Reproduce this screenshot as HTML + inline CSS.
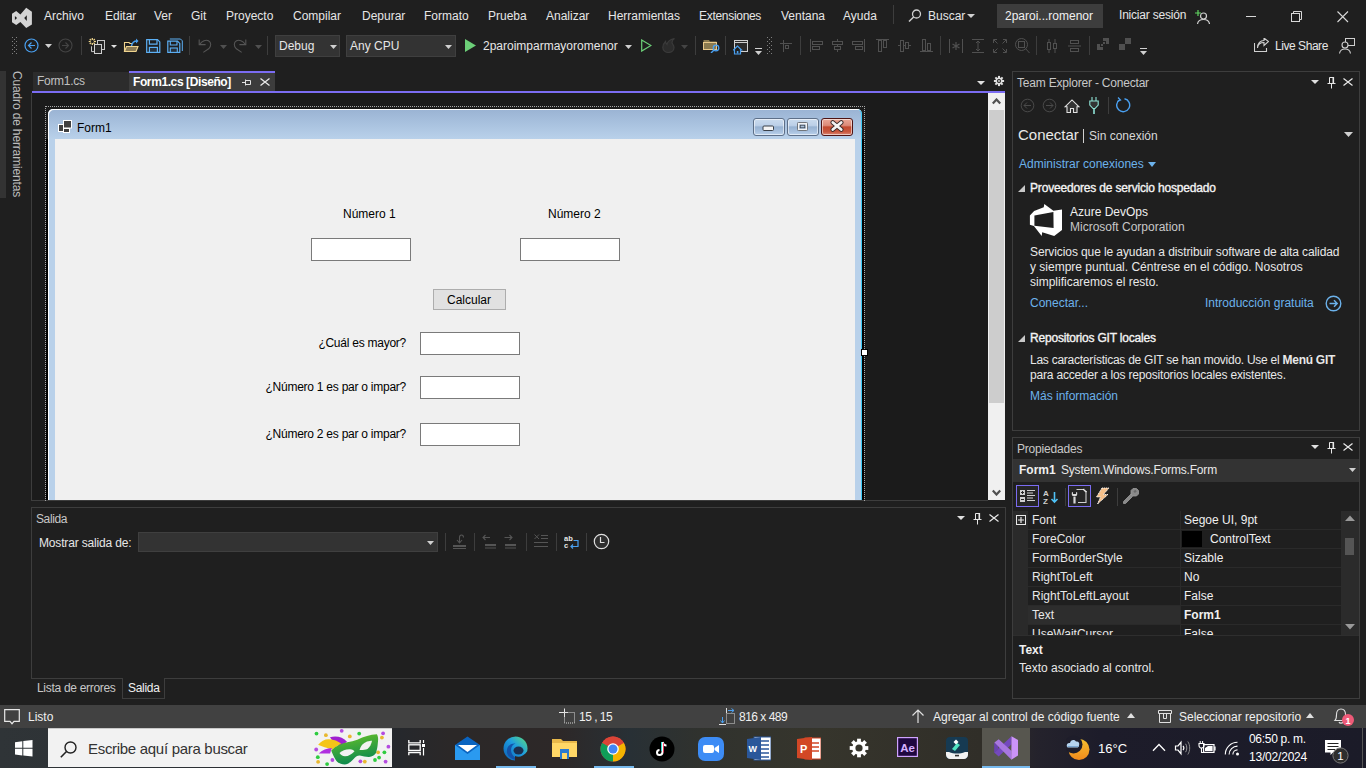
<!DOCTYPE html>
<html><head><meta charset="utf-8"><title>VS</title>
<style>
html,body{margin:0;padding:0;}
body{width:1366px;height:768px;overflow:hidden;background:#1f1f1f;position:relative;font-family:"Liberation Sans",sans-serif;}
body div,body span,body svg{position:absolute;}
span{white-space:pre;}
span b{position:static;}
</style></head><body>
<svg style="left:8px;top:4px;" width="30" height="28" viewBox="0 0 30 28"><path d="M4 9.8 L8.2 6.9 L12.4 10.6 L18.2 3.8 L23.9 7.7 V20.4 L18.2 24.1 L12.4 17.9 L8.2 21.1 L4 18.2 Z M6.9 12 L9.1 14 L6.9 16 Z M18.8 11.3 L16.2 14 L18.8 17 Z" fill="#d4d4d4" fill-rule="evenodd"/></svg>
<span style="left:44px;top:10.03px;font-size:12px;line-height:12px;color:#e6e6e6;font-weight:400;">Archivo</span>
<span style="left:105px;top:10.03px;font-size:12px;line-height:12px;color:#e6e6e6;font-weight:400;">Editar</span>
<span style="left:154px;top:10.03px;font-size:12px;line-height:12px;color:#e6e6e6;font-weight:400;">Ver</span>
<span style="left:191px;top:10.03px;font-size:12px;line-height:12px;color:#e6e6e6;font-weight:400;">Git</span>
<span style="left:226px;top:10.03px;font-size:12px;line-height:12px;color:#e6e6e6;font-weight:400;">Proyecto</span>
<span style="left:293px;top:10.03px;font-size:12px;line-height:12px;color:#e6e6e6;font-weight:400;">Compilar</span>
<span style="left:362px;top:10.03px;font-size:12px;line-height:12px;color:#e6e6e6;font-weight:400;">Depurar</span>
<span style="left:424px;top:10.03px;font-size:12px;line-height:12px;color:#e6e6e6;font-weight:400;">Formato</span>
<span style="left:488px;top:10.03px;font-size:12px;line-height:12px;color:#e6e6e6;font-weight:400;">Prueba</span>
<span style="left:546px;top:10.03px;font-size:12px;line-height:12px;color:#e6e6e6;font-weight:400;">Analizar</span>
<span style="left:608px;top:10.03px;font-size:12px;line-height:12px;color:#e6e6e6;font-weight:400;">Herramientas</span>
<span style="left:699px;top:10.03px;font-size:12px;line-height:12px;color:#e6e6e6;font-weight:400;letter-spacing:-0.3px">Extensiones</span>
<span style="left:781px;top:10.03px;font-size:12px;line-height:12px;color:#e6e6e6;font-weight:400;">Ventana</span>
<span style="left:843px;top:10.03px;font-size:12px;line-height:12px;color:#e6e6e6;font-weight:400;">Ayuda</span>
<div style="left:893px;top:5px;width:1px;height:19px;background:#3d3d3d;"></div>
<svg style="left:908px;top:9px;" width="14" height="13" viewBox="0 0 14 13"><circle cx="8.5" cy="5" r="4" fill="none" stroke="#d0d0d0" stroke-width="1.3"/><path d="M5.6 8 L1 12.5" stroke="#d0d0d0" stroke-width="1.5"/></svg>
<span style="left:928px;top:10.03px;font-size:12px;line-height:12px;color:#e6e6e6;font-weight:400;">Buscar</span>
<svg style="left:967px;top:14px;" width="8" height="5" viewBox="0 0 8 5"><path d="M0 0 H8 L4 4 Z" fill="#d0d0d0"/></svg>
<div style="left:997px;top:4px;width:106px;height:24px;background:#3d3d3d;"></div>
<span style="left:1005px;top:10.03px;font-size:12px;line-height:12px;color:#f0f0f0;font-weight:400;">2paroi...romenor</span>
<span style="left:1119px;top:9.03px;font-size:12px;line-height:12px;color:#e6e6e6;font-weight:400;letter-spacing:-0.2px">Iniciar sesión</span>
<svg style="left:1194px;top:9px;" width="16" height="15" viewBox="0 0 16 15"><path d="M1 4 H7 M4 1 V7" stroke="#5fd35f" stroke-width="1.2"/><circle cx="9.5" cy="7" r="3" fill="none" stroke="#d0d0d0" stroke-width="1.2"/><path d="M3.5 15 C4 11 7 10.5 9.5 10.5 C12 10.5 15 11 15.5 15" fill="none" stroke="#d0d0d0" stroke-width="1.2"/></svg>
<div style="left:1246px;top:16px;width:10px;height:1px;background:#d8d8d8;"></div>
<svg style="left:1291px;top:11px;" width="12" height="11" viewBox="0 0 12 11"><rect x="0.5" y="2.5" width="8" height="8" fill="none" stroke="#d8d8d8"/><path d="M2.5 2.5 V0.5 H10.5 V8.5 H8.5" fill="none" stroke="#d8d8d8"/></svg>
<svg style="left:1337px;top:11px;" width="12" height="12" viewBox="0 0 12 12"><path d="M0.5 0.5 L11 11 M11 0.5 L0.5 11" stroke="#d8d8d8" stroke-width="1.1"/></svg>
<svg style="left:12px;top:37px;" width="5" height="17" viewBox="0 0 5 17"><rect x="0" y="0" width="1" height="1" fill="#808080"/><rect x="4" y="0" width="1" height="1" fill="#808080"/><rect x="2" y="2" width="1" height="1" fill="#808080"/><rect x="0" y="4" width="1" height="1" fill="#808080"/><rect x="4" y="4" width="1" height="1" fill="#808080"/><rect x="2" y="6" width="1" height="1" fill="#808080"/><rect x="0" y="8" width="1" height="1" fill="#808080"/><rect x="4" y="8" width="1" height="1" fill="#808080"/><rect x="2" y="10" width="1" height="1" fill="#808080"/><rect x="0" y="12" width="1" height="1" fill="#808080"/><rect x="4" y="12" width="1" height="1" fill="#808080"/><rect x="2" y="14" width="1" height="1" fill="#808080"/><rect x="0" y="16" width="1" height="1" fill="#808080"/><rect x="4" y="16" width="1" height="1" fill="#808080"/></svg>
<svg style="left:24px;top:38px;" width="15" height="15" viewBox="0 0 15 15"><circle cx="7.5" cy="7.5" r="6.5" fill="none" stroke="#4aa0f0" stroke-width="1.2"/><path d="M11 7.5 H4.5 M7.5 4.5 L4.5 7.5 L7.5 10.5" fill="none" stroke="#4aa0f0" stroke-width="1.2"/></svg>
<svg style="left:45px;top:44px;" width="7" height="4" viewBox="0 0 7 4"><path d="M0 0 H7 L3.5 4 Z" fill="#d0d0d0"/></svg>
<svg style="left:58px;top:38px;" width="15" height="15" viewBox="0 0 15 15"><circle cx="7.5" cy="7.5" r="6.5" fill="none" stroke="#444" stroke-width="1.1"/><path d="M4 7.5 H10.5 M7.5 4.5 L10.5 7.5 L7.5 10.5" fill="none" stroke="#444" stroke-width="1.1"/></svg>
<div style="left:81px;top:36px;width:1px;height:19px;background:#3d3d3d;"></div>
<svg style="left:84px;top:34px;" width="60" height="22" viewBox="0 0 60 22"><g transform="translate(8.3 7.5)"><path d="M0 -1.6 V-3.6" stroke="#f3d98e" stroke-width="1.2" transform="rotate(0)"/><path d="M0 -1.6 V-3.6" stroke="#f3d98e" stroke-width="1.2" transform="rotate(45)"/><path d="M0 -1.6 V-3.6" stroke="#f3d98e" stroke-width="1.2" transform="rotate(90)"/><path d="M0 -1.6 V-3.6" stroke="#f3d98e" stroke-width="1.2" transform="rotate(135)"/><path d="M0 -1.6 V-3.6" stroke="#f3d98e" stroke-width="1.2" transform="rotate(180)"/><path d="M0 -1.6 V-3.6" stroke="#f3d98e" stroke-width="1.2" transform="rotate(225)"/><path d="M0 -1.6 V-3.6" stroke="#f3d98e" stroke-width="1.2" transform="rotate(270)"/><path d="M0 -1.6 V-3.6" stroke="#f3d98e" stroke-width="1.2" transform="rotate(315)"/></g><rect x="13.5" y="6.5" width="7" height="9" fill="#262626" stroke="#c8c8c8" stroke-width="1"/><path d="M7.5 12.3 V17.6 H10" fill="none" stroke="#c8c8c8" stroke-width="1"/><rect x="10.5" y="10.5" width="7" height="9" fill="#2a2a2a" stroke="#d0d0d0" stroke-width="1"/><path d="M27 11 H33 L30 14 Z" fill="#e0e0e0"/><path d="M40.5 17.5 V8.5 H45 L46 9.5 H48" fill="none" stroke="#f0d48e" stroke-width="1.1"/><path d="M40.5 17.5 L42.5 12.5 H54 L52 17.5 Z" fill="#8a7a55" stroke="#f0d48e" stroke-width="1.1"/><path d="M47.5 12 C48 9 50 7 53 7" fill="none" stroke="#4aa0f0" stroke-width="1.5"/><path d="M52 4.5 L54.5 7 L52 9.5 Z" fill="#4aa0f0"/></svg>
<svg style="left:145px;top:38px;" width="17" height="16" viewBox="0 0 17 16"><path d="M1.7 1.6 H12.5 L14.8 3.9 V14.4 H1.7 Z" fill="none" stroke="#5cb0f5" stroke-width="1.2"/><path d="M4.4 1.6 V6.1 H12 V1.6" fill="none" stroke="#5cb0f5" stroke-width="1.2"/><rect x="4.4" y="9.4" width="8" height="5" fill="#26313c" stroke="#5cb0f5" stroke-width="1.2"/></svg>
<svg style="left:166px;top:38px;" width="17" height="16" viewBox="0 0 17 16"><path d="M3.8 1 H14.5 L16.3 2.8 V13" fill="none" stroke="#5cb0f5" stroke-width="1"/><path d="M1.8 3.1 H11.5 L13.8 5.4 V14.4 H1.8 Z" fill="none" stroke="#5cb0f5" stroke-width="1.2"/><path d="M4.3 3.1 V7 H11 V3.1" fill="none" stroke="#5cb0f5" stroke-width="1.1"/><rect x="4.3" y="10" width="7" height="4.4" fill="#26313c" stroke="#5cb0f5" stroke-width="1.1"/></svg>
<div style="left:189px;top:36px;width:1px;height:19px;background:#3d3d3d;"></div>
<svg style="left:196px;top:37px;" width="18" height="18" viewBox="0 0 18 18"><path d="M3.2 2.5 V7.6 H9.6" fill="none" stroke="#555" stroke-width="1.1"/><path d="M3.8 7.2 C6 3.8 10 2.5 12.5 3.8 C15.5 5.5 15.2 9 13 11.5 L7.3 15.4" fill="none" stroke="#555" stroke-width="1.1"/></svg>
<svg style="left:220px;top:45px;" width="7" height="4" viewBox="0 0 7 4"><path d="M0 0 H7 L3.5 4 Z" fill="#505050"/></svg>
<svg style="left:231px;top:37px;" width="18" height="18" viewBox="0 0 18 18"><path d="M14.8 2.5 V7.6 H8.4" fill="none" stroke="#555" stroke-width="1.1"/><path d="M14.2 7.2 C12 3.8 8 2.5 5.5 3.8 C2.5 5.5 2.8 9 5 11.5 L10.7 15.4" fill="none" stroke="#555" stroke-width="1.1"/></svg>
<svg style="left:255px;top:45px;" width="7" height="4" viewBox="0 0 7 4"><path d="M0 0 H7 L3.5 4 Z" fill="#505050"/></svg>
<div style="left:267px;top:36px;width:1px;height:19px;background:#3d3d3d;"></div>
<div style="left:275px;top:35px;width:63px;height:20px;background:#333333;border:1px solid #3f3f3f;"></div>
<span style="left:279px;top:40.03px;font-size:12px;line-height:12px;color:#e6e6e6;font-weight:400;">Debug</span>
<svg style="left:330px;top:45px;" width="7" height="4" viewBox="0 0 7 4"><path d="M0 0 H7 L3.5 4 Z" fill="#d0d0d0"/></svg>
<div style="left:346px;top:35px;width:108px;height:20px;background:#333333;border:1px solid #3f3f3f;"></div>
<span style="left:350px;top:40.03px;font-size:12px;line-height:12px;color:#e6e6e6;font-weight:400;">Any CPU</span>
<svg style="left:445px;top:45px;" width="7" height="4" viewBox="0 0 7 4"><path d="M0 0 H7 L3.5 4 Z" fill="#d0d0d0"/></svg>
<svg style="left:465px;top:39px;" width="12" height="13" viewBox="0 0 12 13"><path d="M0 0 L11 6.5 L0 13 Z" fill="#6ccf78"/></svg>
<span style="left:483px;top:40.03px;font-size:12px;line-height:12px;color:#e6e6e6;font-weight:400;">2paroimparmayoromenor</span>
<svg style="left:625px;top:45px;" width="7" height="4" viewBox="0 0 7 4"><path d="M0 0 H7 L3.5 4 Z" fill="#d0d0d0"/></svg>
<svg style="left:641px;top:39px;" width="11" height="13" viewBox="0 0 11 13"><path d="M0.7 0.9 L10 6.5 L0.7 12.1 Z" fill="none" stroke="#6ccf78" stroke-width="1.2"/></svg>
<svg style="left:662px;top:38px;" width="14" height="15" viewBox="0 0 14 15"><path d="M12.5 0.5 C8 1.5 5.5 3.5 5 6.5 C4 5.5 3.5 4.5 3.5 3.5 C1.5 5.5 0.8 8 0.8 9.5 C0.8 12.5 3.5 14.5 6.5 14.5 C9.5 14.5 12 12.5 12 9.5 C12 7 10 6 10 4.5 C10 3 11 1.5 12.5 0.5 Z" fill="#2c2c2c" stroke="#3a3a3a" stroke-width="1.2"/></svg>
<svg style="left:681px;top:45px;" width="7" height="4" viewBox="0 0 7 4"><path d="M0 0 H7 L3.5 4 Z" fill="#444"/></svg>
<div style="left:695px;top:36px;width:1px;height:19px;background:#3d3d3d;"></div>
<svg style="left:703px;top:39px;" width="18" height="14" viewBox="0 0 18 14"><path d="M0.5 1 H6 L7 2.5 H13.5 V10.5 H0.5 Z" fill="#8a7a50"/><rect x="0.5" y="3.5" width="13" height="7" fill="none" stroke="#e8c88a" stroke-width="1"/><circle cx="13" cy="9" r="2.8" fill="none" stroke="#4aa0f0" stroke-width="1.3"/><path d="M11 11 L8 14" stroke="#4aa0f0" stroke-width="1.4"/></svg>
<div style="left:725px;top:36px;width:1px;height:19px;background:#3d3d3d;"></div>
<svg style="left:733px;top:39px;" width="17" height="16" viewBox="0 0 17 16"><rect x="1.5" y="1.5" width="13" height="11" fill="#2b2b2b" stroke="#d0d0d0" stroke-width="1"/><path d="M1.5 3.5 H14.5" stroke="#d0d0d0" stroke-width="1"/><path d="M0.5 11 L4.5 7 L8.5 11 H7.5 V15 H1.5 V11 Z" fill="#1f1f1f" stroke="#4aa0f0" stroke-width="1.2"/><rect x="3.8" y="12" width="1.6" height="2.5" fill="#4aa0f0"/></svg>
<svg style="left:755px;top:48px;" width="7" height="8" viewBox="0 0 7 8"><rect x="0" y="0" width="7" height="1" fill="#d0d0d0"/><path d="M0 3 H7 L3.5 7 Z" fill="#d0d0d0"/></svg>
<svg style="left:767px;top:37px;" width="5" height="17" viewBox="0 0 5 17"><rect x="0" y="0" width="1" height="1" fill="#808080"/><rect x="4" y="0" width="1" height="1" fill="#808080"/><rect x="2" y="2" width="1" height="1" fill="#808080"/><rect x="0" y="4" width="1" height="1" fill="#808080"/><rect x="4" y="4" width="1" height="1" fill="#808080"/><rect x="2" y="6" width="1" height="1" fill="#808080"/><rect x="0" y="8" width="1" height="1" fill="#808080"/><rect x="4" y="8" width="1" height="1" fill="#808080"/><rect x="2" y="10" width="1" height="1" fill="#808080"/><rect x="0" y="12" width="1" height="1" fill="#808080"/><rect x="4" y="12" width="1" height="1" fill="#808080"/><rect x="2" y="14" width="1" height="1" fill="#808080"/><rect x="0" y="16" width="1" height="1" fill="#808080"/><rect x="4" y="16" width="1" height="1" fill="#808080"/></svg>
<svg style="left:780px;top:40px;" width="13" height="13" viewBox="0 0 13 13"><path d="M0 3.5 H12 M3.5 0 V12" stroke="#505050"/><rect x="5.5" y="5.5" width="3" height="3" fill="none" stroke="#505050"/></svg>
<div style="left:800px;top:36px;width:1px;height:19px;background:#3d3d3d;"></div>
<svg style="left:810px;top:39px;" width="13" height="14" viewBox="0 0 13 14"><path d="M0.5 0 V13" stroke="#505050"/><rect x="2.5" y="2.5" width="10" height="3" fill="none" stroke="#505050"/><rect x="2.5" y="7.5" width="7" height="3" fill="none" stroke="#505050"/></svg>
<svg style="left:831px;top:39px;" width="13" height="14" viewBox="0 0 13 14"><path d="M6.5 0 V13" stroke="#505050"/><rect x="1.5" y="2.5" width="10" height="3" fill="#1f1f1f" stroke="#505050"/><rect x="3.5" y="7.5" width="6" height="3" fill="#1f1f1f" stroke="#505050"/></svg>
<svg style="left:852px;top:39px;" width="13" height="14" viewBox="0 0 13 14"><path d="M12.5 0 V13" stroke="#505050"/><rect x="0.5" y="2.5" width="10" height="3" fill="none" stroke="#505050"/><rect x="3.5" y="7.5" width="7" height="3" fill="none" stroke="#505050"/></svg>
<svg style="left:876px;top:39px;" width="13" height="14" viewBox="0 0 13 14"><path d="M0 0.5 H13" stroke="#505050"/><rect x="2.5" y="1.5" width="3" height="11" fill="none" stroke="#505050"/><rect x="7.5" y="1.5" width="3" height="7" fill="none" stroke="#505050"/></svg>
<svg style="left:898px;top:39px;" width="13" height="14" viewBox="0 0 13 14"><path d="M0 6.5 H13" stroke="#505050"/><rect x="2.5" y="1.5" width="3" height="11" fill="#1f1f1f" stroke="#505050"/><rect x="7.5" y="3.5" width="3" height="6" fill="#1f1f1f" stroke="#505050"/></svg>
<svg style="left:920px;top:39px;" width="13" height="14" viewBox="0 0 13 14"><path d="M0 12.5 H13" stroke="#505050"/><rect x="2.5" y="0.5" width="3" height="11" fill="none" stroke="#505050"/><rect x="7.5" y="4.5" width="3" height="7" fill="none" stroke="#505050"/></svg>
<div style="left:940px;top:36px;width:1px;height:19px;background:#3d3d3d;"></div>
<svg style="left:949px;top:39px;" width="14" height="14" viewBox="0 0 14 14"><path d="M0.5 0 V14 M13.5 0 V14" stroke="#505050"/><path d="M7 3 V11 M3.5 5 L10.5 9 M10.5 5 L3.5 9" stroke="#505050" stroke-width="1.2"/></svg>
<svg style="left:971px;top:39px;" width="14" height="14" viewBox="0 0 14 14"><path d="M1 0.5 H13 M1 13.5 H13 M7 2 V12 M5 4 L7 2 L9 4 M5 10 L7 12 L9 10" fill="none" stroke="#505050"/></svg>
<svg style="left:993px;top:39px;" width="14" height="14" viewBox="0 0 14 14"><path d="M0.5 4 V0.5 H4 M10 0.5 H13.5 V4 M13.5 10 V13.5 H10 M4 13.5 H0.5 V10 M1 1 L4.5 4.5 M13 1 L9.5 4.5 M13 13 L9.5 9.5 M1 13 L4.5 9.5" fill="none" stroke="#505050"/></svg>
<svg style="left:1015px;top:38px;" width="15" height="16" viewBox="0 0 15 16"><circle cx="6.5" cy="6.5" r="6" fill="none" stroke="#505050"/><rect x="3.5" y="3.5" width="6" height="6" fill="none" stroke="#505050"/><path d="M10.5 10.5 L14.5 15" stroke="#505050"/></svg>
<div style="left:1036px;top:36px;width:1px;height:19px;background:#3d3d3d;"></div>
<svg style="left:1046px;top:39px;" width="12" height="14" viewBox="0 0 12 14"><path d="M3 0 V14 M9 0 V14" stroke="#505050"/><rect x="1.5" y="3.5" width="3" height="7" fill="#1f1f1f" stroke="#505050"/><rect x="7.5" y="4.5" width="3" height="5" fill="#1f1f1f" stroke="#505050"/></svg>
<svg style="left:1068px;top:39px;" width="13" height="14" viewBox="0 0 13 14"><path d="M0 7 H13" stroke="#505050"/><rect x="2.5" y="1.5" width="8" height="3" fill="#1f1f1f" stroke="#505050"/><rect x="2.5" y="9.5" width="8" height="3" fill="#1f1f1f" stroke="#505050"/></svg>
<div style="left:1089px;top:36px;width:1px;height:19px;background:#3d3d3d;"></div>
<svg style="left:1097px;top:38px;" width="13" height="13" viewBox="0 0 13 13"><rect x="0" y="6" width="6" height="6" fill="#505050"/><rect x="6" y="0" width="6" height="6" fill="#505050"/><rect x="3.5" y="3.5" width="5" height="5" fill="none" stroke="#1f1f1f"/></svg>
<svg style="left:1119px;top:38px;" width="13" height="13" viewBox="0 0 13 13"><rect x="0" y="6" width="6" height="6" fill="#505050"/><rect x="6" y="0" width="6" height="6" fill="#505050"/></svg>
<svg style="left:1140px;top:48px;" width="7" height="8" viewBox="0 0 7 8"><rect x="0" y="0" width="7" height="1" fill="#d0d0d0"/><path d="M0 3 H7 L3.5 7 Z" fill="#d0d0d0"/></svg>
<svg style="left:1254px;top:38px;" width="15" height="14" viewBox="0 0 15 14"><path d="M0.5 5 V13.5 H12.5 V10" fill="none" stroke="#d0d0d0" stroke-width="1.1"/><path d="M3.5 10 C4 6 7 4.5 10 4.5 V7.5 L14.5 3.5 L10 0 V2.5 C6.5 2.5 3.5 5 3.5 10 Z" fill="none" stroke="#d0d0d0" stroke-width="1.1"/></svg>
<span style="left:1275px;top:40.03px;font-size:12px;line-height:12px;color:#e6e6e6;font-weight:400;letter-spacing:-0.45px">Live Share</span>
<svg style="left:1339px;top:38px;" width="16" height="16" viewBox="0 0 16 16"><rect x="6.5" y="0.5" width="9" height="7" fill="none" stroke="#d0d0d0"/><circle cx="6" cy="7" r="3" fill="#1f1f1f" stroke="#d0d0d0" stroke-width="1.1"/><path d="M0.5 15.5 C1 12 3.5 11 6 11 C8.5 11 11 12 11.5 15.5" fill="none" stroke="#d0d0d0" stroke-width="1.1"/></svg>
<div style="left:0px;top:71px;width:6px;height:127px;background:#333333;"></div>
<span style="left:23px;top:71px;font-size:12px;line-height:12px;color:#bdbdbd;letter-spacing:-0.15px;transform-origin:0 0;transform:rotate(90deg)">Cuadro de herramientas</span>
<div style="left:33px;top:72px;width:96px;height:19px;background:#2c2c2c;"></div>
<span style="left:37px;top:75.03px;font-size:12px;line-height:12px;color:#c0c0c0;font-weight:400;letter-spacing:-0.3px">Form1.cs</span>
<div style="left:129px;top:71px;width:146px;height:2px;background:#7b6cf2;"></div>
<div style="left:129px;top:73px;width:146px;height:18px;background:#3c3c3c;"></div>
<span style="left:133px;top:76.03px;font-size:12px;line-height:12px;color:#ffffff;font-weight:700;letter-spacing:-0.4px">Form1.cs [Diseño]</span>
<svg style="left:242px;top:78px;" width="9" height="9" viewBox="0 0 9 9"><path d="M0 4.5 H3 M3.5 1.5 V7.5 M3.5 2.5 H8.5 V6.5 H3.5" fill="none" stroke="#e0e0e0" stroke-width="1"/></svg>
<svg style="left:260px;top:78px;" width="10" height="8" viewBox="0 0 10 8"><path d="M0.5 0.5 L9.5 7.5 M9.5 0.5 L0.5 7.5" stroke="#e8e8e8" stroke-width="1.3"/></svg>
<svg style="left:977px;top:81px;" width="8" height="4" viewBox="0 0 8 4"><path d="M0 0 H8 L4 4 Z" fill="#e0e0e0"/></svg>
<svg style="left:993px;top:75px;" width="12" height="12" viewBox="0 0 12 12"><circle cx="6" cy="6" r="3.5" fill="#e0e0e0"/><rect x="5" y="0.9" width="2" height="2.6" fill="#e0e0e0" transform="rotate(0 6 6)"/><rect x="5" y="0.9" width="2" height="2.6" fill="#e0e0e0" transform="rotate(45 6 6)"/><rect x="5" y="0.9" width="2" height="2.6" fill="#e0e0e0" transform="rotate(90 6 6)"/><rect x="5" y="0.9" width="2" height="2.6" fill="#e0e0e0" transform="rotate(135 6 6)"/><rect x="5" y="0.9" width="2" height="2.6" fill="#e0e0e0" transform="rotate(180 6 6)"/><rect x="5" y="0.9" width="2" height="2.6" fill="#e0e0e0" transform="rotate(225 6 6)"/><rect x="5" y="0.9" width="2" height="2.6" fill="#e0e0e0" transform="rotate(270 6 6)"/><rect x="5" y="0.9" width="2" height="2.6" fill="#e0e0e0" transform="rotate(315 6 6)"/><circle cx="6" cy="6" r="2" fill="#1f1f1f"/><circle cx="6" cy="6" r="0.9" fill="#e0e0e0"/></svg>
<div style="left:32px;top:91px;width:973px;height:2px;background:#7b6cf2;"></div>
<div style="left:31px;top:93px;width:1px;height:408px;background:#3d3d3d;"></div>
<div style="left:31px;top:500px;width:957px;height:1px;background:#3d3d3d;"></div>
<div style="left:32px;top:93px;width:956px;height:407px;background:#1b1b1b;"></div>
<div style="left:988px;top:93px;width:17px;height:407px;background:#f0f0f0;"></div>
<div style="left:989px;top:110px;width:15px;height:293px;background:#cdcdcd;"></div>
<svg style="left:992px;top:98px;" width="9" height="7" viewBox="0 0 9 7"><path d="M0.8 5.5 L4.5 1.5 L8.2 5.5" fill="none" stroke="#505050" stroke-width="2.2"/></svg>
<svg style="left:992px;top:489px;" width="9" height="7" viewBox="0 0 9 7"><path d="M0.8 1.5 L4.5 5.5 L8.2 1.5" fill="none" stroke="#505050" stroke-width="2.2"/></svg>
<div style="left:45px;top:106px;width:818px;height:394px;border-top:1px dotted #a8a8a8;border-left:1px dotted #a8a8a8;border-right:1px dotted #a8a8a8"></div>
<div style="left:46px;top:139px;width:2px;height:361px;background:#000;"></div>
<div style="left:48px;top:109px;width:814px;height:391px;background:linear-gradient(#9ab3d3 0px,#a9c2df 15px,#b9d1ea 30px,#b9d1ea 100%);border-radius:5px 5px 0 0;box-shadow:inset 1px 1px 0 #ffffff, inset -1px 0 0 #3cc8f5"></div>
<div style="left:55px;top:139px;width:800px;height:361px;background:#f0f0f0;"></div>
<svg style="left:58px;top:120px;" width="14" height="13" viewBox="0 0 14 13"><rect x="5.5" y="0.5" width="8" height="7.5" fill="#404040" stroke="#fff" stroke-width="1"/><rect x="0.5" y="4.5" width="5" height="7" fill="#404040" stroke="#fff"/><rect x="5.5" y="8.5" width="6" height="4" fill="#404040" stroke="#fff"/></svg>
<span style="left:77px;top:122.03px;font-size:12px;line-height:12px;color:#000;font-weight:400;">Form1</span>
<div style="left:753px;top:118px;width:30px;height:16px;border:1px solid #5d6f88;border-radius:3px;background:linear-gradient(#cadbee 0%,#bcd0e8 40%,#97b2d2 50%,#a9c2df 80%,#bcd3ec 100%);box-shadow:inset 0 0 0 1px rgba(255,255,255,0.55)"></div>
<div style="left:787px;top:118px;width:30px;height:16px;border:1px solid #5d6f88;border-radius:3px;background:linear-gradient(#cadbee 0%,#bcd0e8 40%,#97b2d2 50%,#a9c2df 80%,#bcd3ec 100%);box-shadow:inset 0 0 0 1px rgba(255,255,255,0.55)"></div>
<div style="left:821px;top:118px;width:30px;height:16px;border:1px solid #4e1414;border-radius:3px;background:linear-gradient(#eaa898 0%,#dc8a78 40%,#c24a30 50%,#c9583e 80%,#dc8a78 100%);box-shadow:inset 0 0 0 1px rgba(255,255,255,0.55)"></div>
<svg style="left:762px;top:125px;" width="13" height="7" viewBox="0 0 13 7"><rect x="1" y="1" width="10.5" height="4.5" rx="1" fill="#f4f4f4" stroke="#3a4048" stroke-width="1"/></svg>
<svg style="left:796px;top:121px;" width="13" height="11" viewBox="0 0 13 11"><rect x="1.5" y="1.5" width="10" height="8" rx="1" fill="none" stroke="#3a4048" stroke-width="1"/><rect x="2.5" y="2.5" width="8" height="6" fill="none" stroke="#f4f4f4" stroke-width="1.6"/><rect x="4.2" y="4.2" width="4.6" height="2.6" fill="#a8c0dc" stroke="#3a4048" stroke-width="0.8"/></svg>
<svg style="left:829px;top:120px;" width="16" height="12" viewBox="0 0 16 12"><path d="M3.8 2.5 L12.2 9.5 M12.2 2.5 L3.8 9.5" stroke="#3a2a2a" stroke-width="4.6" stroke-linecap="round"/><path d="M3.8 2.5 L12.2 9.5 M12.2 2.5 L3.8 9.5" stroke="#f4f4f4" stroke-width="2.8" stroke-linecap="round"/></svg>
<div style="left:862px;top:139px;width:2px;height:361px;background:#000;"></div>
<div style="left:861px;top:349px;width:7px;height:7px;background:#fff;border:1px solid #000;box-sizing:border-box"></div>
<span style="left:343px;top:208.03px;font-size:12px;line-height:12px;color:#000;font-weight:400;">Número 1</span>
<span style="left:548px;top:208.03px;font-size:12px;line-height:12px;color:#000;font-weight:400;">Número 2</span>
<div style="left:311px;top:238px;width:98px;height:21px;background:#fff;border:1px solid #7a7a7a;"></div>
<div style="left:520px;top:238px;width:98px;height:21px;background:#fff;border:1px solid #7a7a7a;"></div>
<div style="left:433px;top:289px;width:71px;height:19px;background:#e1e1e1;border:1px solid #adadad;"></div>
<span style="left:447px;top:294.03px;font-size:12px;line-height:12px;color:#000;font-weight:400;">Calcular</span>
<span style="left:6px;width:400px;text-align:right;top:337.03px;font-size:12px;line-height:12px;color:#000;letter-spacing:-0.25px">¿Cuál es mayor?</span>
<div style="left:420px;top:332px;width:98px;height:21px;background:#fff;border:1px solid #7a7a7a;"></div>
<span style="left:6px;width:400px;text-align:right;top:381.03px;font-size:12px;line-height:12px;color:#000;letter-spacing:-0.25px">¿Número 1 es par o impar?</span>
<div style="left:420px;top:376px;width:98px;height:21px;background:#fff;border:1px solid #7a7a7a;"></div>
<span style="left:6px;width:400px;text-align:right;top:428.03px;font-size:12px;line-height:12px;color:#000;letter-spacing:-0.25px">¿Número 2 es par o impar?</span>
<div style="left:420px;top:423px;width:98px;height:21px;background:#fff;border:1px solid #7a7a7a;"></div>
<div style="left:31px;top:507px;width:973px;height:170px;background:#1f1f1f;border:1px solid #3d3d3d;"></div>
<span style="left:36px;top:513.03px;font-size:12px;line-height:12px;color:#c8c8c8;font-weight:400;letter-spacing:-0.4px">Salida</span>
<span style="left:39px;top:537.03px;font-size:12px;line-height:12px;color:#e6e6e6;font-weight:400;letter-spacing:-0.17px">Mostrar salida de:</span>
<div style="left:138px;top:532px;width:298px;height:18px;background:#333333;border:1px solid #3f3f3f;"></div>
<svg style="left:427px;top:541px;" width="7" height="4" viewBox="0 0 7 4"><path d="M0 0 H7 L3.5 4 Z" fill="#d0d0d0"/></svg>
<div style="left:445px;top:533px;width:1px;height:18px;background:#3d3d3d;"></div>
<div style="left:474px;top:533px;width:1px;height:18px;background:#3d3d3d;"></div>
<div style="left:526px;top:533px;width:1px;height:18px;background:#3d3d3d;"></div>
<div style="left:556px;top:533px;width:1px;height:18px;background:#3d3d3d;"></div>
<div style="left:586px;top:533px;width:1px;height:18px;background:#3d3d3d;"></div>
<svg style="left:452px;top:534px;" width="15" height="16" viewBox="0 0 15 16"><path d="M7.5 8 V3.5 Q7.5 1 9.5 1 Q11.5 1 11.5 3.5 M5 6 L7.5 9 L10 6" fill="none" stroke="#555555" stroke-width="1.1"/><rect x="1" y="11" width="13" height="2" fill="#555555"/><path d="M1 14.5 H14" stroke="#555555"/></svg>
<svg style="left:482px;top:534px;" width="15" height="16" viewBox="0 0 15 16"><path d="M1 3.5 H8 M3.5 1 L1 3.5 L3.5 6" fill="none" stroke="#555555" stroke-width="1.1"/><rect x="3" y="10" width="11" height="2" fill="#555555"/><rect x="3" y="13.5" width="11" height="1" fill="#555555"/><rect x="3" y="11.5" width="11" height="0.6" fill="#555555"/></svg>
<svg style="left:504px;top:534px;" width="15" height="16" viewBox="0 0 15 16"><path d="M0.5 3.5 H8 M5.5 1 L8 3.5 L5.5 6" fill="none" stroke="#555555" stroke-width="1.1"/><rect x="1" y="10" width="11" height="2" fill="#555555"/><rect x="1" y="13.5" width="11" height="1" fill="#555555"/><rect x="1" y="11.5" width="11" height="0.6" fill="#555555"/></svg>
<svg style="left:534px;top:534px;" width="16" height="16" viewBox="0 0 16 16"><path d="M0.5 0.5 L5 5 M5 0.5 L0.5 5 M7 1.5 H14 M7 4.5 H14 M0 8.5 H14 M0 12.5 H14" fill="none" stroke="#555555" stroke-width="1"/></svg>
<svg style="left:564px;top:534px;" width="16" height="16" viewBox="0 0 16 16"><text x="0" y="6.5" font-family="Liberation Sans" font-size="7.5" font-weight="700" fill="#e8e8e8">ab</text><text x="0" y="14" font-family="Liberation Sans" font-size="7.5" font-weight="700" fill="#e8e8e8">c</text><path d="M9.5 6.5 H14 V12.5 H7 M9 10.5 L7 12.5 L9 14.5" fill="none" stroke="#4aa0f0" stroke-width="1.2"/></svg>
<svg style="left:593px;top:533px;" width="17" height="17" viewBox="0 0 17 17"><circle cx="8.5" cy="8.5" r="7.2" fill="#2e2e2e" stroke="#e0e0e0" stroke-width="1.2"/><path d="M7.5 4 V9.5 H11.5" fill="none" stroke="#e0e0e0" stroke-width="1.2"/></svg>
<span style="left:37px;top:682.03px;font-size:12px;line-height:12px;color:#c8c8c8;font-weight:400;letter-spacing:-0.3px">Lista de errores</span>
<div style="left:122px;top:678px;width:41px;height:20px;background:#1f1f1f;border:1px solid #3d3d3d;border-top:none"></div>
<span style="left:128px;top:682.03px;font-size:12px;line-height:12px;color:#f0f0f0;font-weight:400;letter-spacing:-0.3px">Salida</span>
<div style="left:1012px;top:71px;width:346px;height:358px;background:#1f1f1f;border:1px solid #3d3d3d;"></div>
<span style="left:1017px;top:77.03px;font-size:12px;line-height:12px;color:#c8c8c8;font-weight:400;letter-spacing:-0.2px">Team Explorer - Conectar</span>
<svg style="left:1020px;top:98px;" width="15" height="15" viewBox="0 0 15 15"><circle cx="7.5" cy="7.5" r="6.3" fill="none" stroke="#4a4a4a"/><path d="M11 7.5 H4 M7 4.5 L4 7.5 L7 10.5" fill="none" stroke="#4a4a4a"/></svg>
<svg style="left:1042px;top:98px;" width="15" height="15" viewBox="0 0 15 15"><circle cx="7.5" cy="7.5" r="6.3" fill="none" stroke="#4a4a4a"/><path d="M4 7.5 H11 M8 4.5 L11 7.5 L8 10.5" fill="none" stroke="#4a4a4a"/></svg>
<svg style="left:1064px;top:99px;" width="16" height="15" viewBox="0 0 16 15"><path d="M1 7.8 L8 0.9 L15 7.8 H13 V13.5 H9.5 V9.5 H6.5 V13.5 H3 V7.8 Z" fill="#333" stroke="#e0e0e0" stroke-width="1.1" stroke-linejoin="miter"/></svg>
<svg style="left:1089px;top:97px;" width="10" height="18" viewBox="0 0 10 18"><path d="M3 0 V4 M7 0 V4" stroke="#8fe3d6" stroke-width="1.1"/><path d="M0.8 4 H9.2 V8 L6 11.5 H4 L0.8 8 Z" fill="#333" stroke="#8fe3d6" stroke-width="1.1"/><path d="M5 11.5 V17" stroke="#8fe3d6" stroke-width="1.6"/></svg>
<div style="left:1108px;top:97px;width:1px;height:17px;background:#3d3d3d;"></div>
<svg style="left:1116px;top:97px;" width="17" height="17" viewBox="0 0 17 17"><path d="M4 2.5 A6.5 6.5 0 1 0 8.5 1.8" fill="none" stroke="#4aa0f0" stroke-width="1.4"/><path d="M2 0.5 L4.5 3 L1.5 4.5" fill="none" stroke="#4aa0f0" stroke-width="1.3"/></svg>
<span style="left:1018px;top:126.54px;font-size:15px;line-height:15px;color:#e8e8e8;font-weight:400;">Conectar</span>
<div style="left:1083px;top:129px;width:1px;height:14px;background:#d0d0d0;"></div>
<span style="left:1089px;top:130.03px;font-size:12px;line-height:12px;color:#d8d8d8;font-weight:400;">Sin conexión</span>
<svg style="left:1344px;top:132px;" width="9" height="5" viewBox="0 0 9 5"><path d="M0 0 H9 L4.5 5 Z" fill="#d0d0d0"/></svg>
<span style="left:1019px;top:158.03px;font-size:12px;line-height:12px;color:#6cb2eb;font-weight:400;">Administrar conexiones</span>
<svg style="left:1148px;top:162px;" width="8" height="5" viewBox="0 0 8 5"><path d="M0 0 H8 L4 5 Z" fill="#6cb2eb"/></svg>
<svg style="left:1018px;top:185px;" width="7" height="7" viewBox="0 0 7 7"><path d="M7 0 V7 H0 Z" fill="#c8c8c8"/></svg>
<span style="left:1030px;top:182.03px;font-size:12px;line-height:12px;color:#f4f4f4;font-weight:400;letter-spacing:-0.17px;-webkit-text-stroke:0.35px #f4f4f4">Proveedores de servicio hospedado</span>
<svg style="left:1025px;top:200px;" width="40" height="40" viewBox="0 0 40 40"><path d="M4.9 15.6 L9.1 10.9 L18.75 7.3 L19.3 3.9 L28.4 10.7 L37 9.6 V30 L29.2 35.9 L17.2 32.3 L16.7 35.9 L8.9 26 L4.9 24.7 Z M9.4 15.4 L28.4 12 L28.6 27.9 L9.4 25.8 Z" fill="#ffffff" fill-rule="evenodd"/></svg>
<span style="left:1070px;top:206.03px;font-size:12px;line-height:12px;color:#f0f0f0;font-weight:400;">Azure DevOps</span>
<span style="left:1070px;top:221.03px;font-size:12px;line-height:12px;color:#c8c8c8;font-weight:400;">Microsoft Corporation</span>
<span style="left:1030px;top:246.03px;font-size:12px;line-height:12px;color:#e8e8e8;font-weight:;letter-spacing:-0.1px">Servicios que le ayudan a distribuir software de alta calidad</span>
<span style="left:1030px;top:261.03px;font-size:12px;line-height:12px;color:#e8e8e8;font-weight:400;">y siempre puntual. Céntrese en el código. Nosotros</span>
<span style="left:1030px;top:276.03px;font-size:12px;line-height:12px;color:#e8e8e8;font-weight:400;">simplificaremos el resto.</span>
<span style="left:1030px;top:297.03px;font-size:12px;line-height:12px;color:#6cb2eb;font-weight:400;">Conectar...</span>
<span style="left:1205px;top:297.03px;font-size:12px;line-height:12px;color:#6cb2eb;font-weight:400;">Introducción gratuita</span>
<svg style="left:1325px;top:295px;" width="17" height="17" viewBox="0 0 17 17"><circle cx="8.5" cy="8.5" r="7.3" fill="none" stroke="#6cb2eb" stroke-width="1.4"/><path d="M4.5 8.5 H12 M9 5.3 L12.2 8.5 L9 11.7" fill="none" stroke="#6cb2eb" stroke-width="1.4"/></svg>
<svg style="left:1018px;top:335px;" width="7" height="7" viewBox="0 0 7 7"><path d="M7 0 V7 H0 Z" fill="#c8c8c8"/></svg>
<span style="left:1030px;top:332.03px;font-size:12px;line-height:12px;color:#f4f4f4;font-weight:400;letter-spacing:-0.2px;-webkit-text-stroke:0.35px #f4f4f4">Repositorios GIT locales</span>
<span style="left:1030px;top:354.03px;font-size:12px;line-height:12px;color:#e8e8e8;font-weight:400;letter-spacing:-0.26px">Las características de GIT se han movido. Use el <b>Menú GIT</b></span>
<span style="left:1030px;top:369.03px;font-size:12px;line-height:12px;color:#e8e8e8;font-weight:400;letter-spacing:-0.19px">para acceder a los repositorios locales existentes.</span>
<span style="left:1030px;top:390.03px;font-size:12px;line-height:12px;color:#6cb2eb;font-weight:400;">Más información</span>
<div style="left:1012px;top:437px;width:346px;height:260px;background:#1f1f1f;border:1px solid #3d3d3d;"></div>
<span style="left:1017px;top:443.03px;font-size:12px;line-height:12px;color:#c8c8c8;font-weight:400;letter-spacing:-0.2px">Propiedades</span>
<div style="left:1013px;top:459px;width:346px;height:23px;background:#333333;"></div>
<span style="left:1019px;top:464.03px;font-size:12px;line-height:12px;color:#f0f0f0;font-weight:700;">Form1</span>
<span style="left:1061px;top:464.03px;font-size:12px;line-height:12px;color:#e8e8e8;font-weight:400;letter-spacing:-0.19px">System.Windows.Forms.Form</span>
<svg style="left:1349px;top:468px;" width="7" height="4" viewBox="0 0 7 4"><path d="M0 0 H7 L3.5 4 Z" fill="#d0d0d0"/></svg>
<div style="left:1016px;top:485px;width:21px;height:20px;background:#262626;border:1px solid #7b6cf2;"></div>
<svg style="left:1020px;top:489px;" width="16" height="15" viewBox="0 0 16 15"><rect x="0" y="1" width="5" height="5" fill="#d0d0d0"/><rect x="0" y="8" width="5" height="5" fill="#d0d0d0"/><path d="M2.5 2 V5 M1 3.5 H4 M1 10.5 H4" stroke="#262626"/><path d="M7 1.5 H15 M7 4 H13 M7 6.5 H15 M7 9 H13 M7 11.5 H15" stroke="#d0d0d0"/></svg>
<svg style="left:1043px;top:488px;" width="16" height="17" viewBox="0 0 16 17"><text x="0" y="8" font-family="Liberation Sans" font-size="8" font-weight="700" fill="#d0d0d0">A</text><text x="0" y="16" font-family="Liberation Sans" font-size="8" font-weight="700" fill="#d0d0d0">Z</text><path d="M11.5 4 V14 M8.5 11 L11.5 14 L14.5 11" fill="none" stroke="#4fc1f5" stroke-width="1.6"/></svg>
<div style="left:1065px;top:488px;width:1px;height:18px;background:#3d3d3d;"></div>
<div style="left:1068px;top:485px;width:21px;height:20px;background:#262626;border:1px solid #7b6cf2;"></div>
<svg style="left:1070px;top:488px;" width="18" height="17" viewBox="0 0 18 17"><path d="M6.5 1.5 H13.5 L16 4 V14.5 H8" fill="none" stroke="#d0d0d0" stroke-width="1.1"/><path d="M13.5 1 L16.5 4" stroke="#fff" stroke-width="1.3" stroke-dasharray="1 0.6"/><path d="M4.5 9 V15.5" stroke="#d8d8d8" stroke-width="2.2"/><path d="M1.8 4.5 V6.5 C1.8 9 7.2 9 7.2 6.5 V4.5 L6 4 V6 H3 V4 Z" fill="#d8d8d8"/></svg>
<svg style="left:1094px;top:487px;" width="16" height="18" viewBox="0 0 16 18"><path d="M8 1 H15 L9.5 7.5 H14 L3.5 17 L6.5 10 H2.5 Z" fill="#f5c08a" stroke="#ffffff" stroke-width="0.9" stroke-dasharray="1.2 0.7"/></svg>
<div style="left:1117px;top:488px;width:1px;height:18px;background:#3d3d3d;"></div>
<svg style="left:1122px;top:487px;" width="18" height="18" viewBox="0 0 18 18"><path d="M11 1.5 L14.5 1.5 L16.5 3.5 V7 L14.5 9 H11 L9 7 L1.5 14.5 V16.5 H3.5 L10.5 9.5 L9 7 V3.5 Z" fill="#8a8a8a" stroke="#9a9a9a" stroke-width="0.8"/><rect x="12" y="3" width="2.2" height="2.6" fill="#6a6a6a" transform="rotate(45 13 4.3)"/></svg>
<div style="left:1013px;top:511px;width:328px;height:124px;background:#2a2a2a;"></div>
<div style="left:1028px;top:511px;width:152px;height:18px;background:#1f1f1f;"></div>
<div style="left:1181px;top:511px;width:160px;height:18px;background:#1f1f1f;"></div>
<div style="left:1028px;top:530px;width:152px;height:18px;background:#1f1f1f;"></div>
<div style="left:1181px;top:530px;width:160px;height:18px;background:#1f1f1f;"></div>
<div style="left:1028px;top:549px;width:152px;height:18px;background:#1f1f1f;"></div>
<div style="left:1181px;top:549px;width:160px;height:18px;background:#1f1f1f;"></div>
<div style="left:1028px;top:568px;width:152px;height:18px;background:#1f1f1f;"></div>
<div style="left:1181px;top:568px;width:160px;height:18px;background:#1f1f1f;"></div>
<div style="left:1028px;top:587px;width:152px;height:18px;background:#1f1f1f;"></div>
<div style="left:1181px;top:587px;width:160px;height:18px;background:#1f1f1f;"></div>
<div style="left:1028px;top:606px;width:152px;height:18px;background:#2d2d2d;"></div>
<div style="left:1181px;top:606px;width:160px;height:18px;background:#1f1f1f;"></div>
<div style="left:1028px;top:625px;width:152px;height:10px;background:#1f1f1f;"></div>
<div style="left:1181px;top:625px;width:160px;height:10px;background:#1f1f1f;"></div>
<div style="left:1013px;top:511px;width:328px;height:124px;overflow:hidden"><span style="left:19px;top:3.03px;font-size:12px;line-height:12px;color:#e8e8e8">Font</span><span style="left:171px;top:3.03px;font-size:12px;line-height:12px;color:#f0f0f0;font-weight:400">Segoe UI, 9pt</span><span style="left:19px;top:22.03px;font-size:12px;line-height:12px;color:#e8e8e8">ForeColor</span><span style="left:197px;top:22.03px;font-size:12px;line-height:12px;color:#f0f0f0;font-weight:400">ControlText</span><span style="left:19px;top:41.03px;font-size:12px;line-height:12px;color:#e8e8e8">FormBorderStyle</span><span style="left:171px;top:41.03px;font-size:12px;line-height:12px;color:#f0f0f0;font-weight:400">Sizable</span><span style="left:19px;top:60.03px;font-size:12px;line-height:12px;color:#e8e8e8">RightToLeft</span><span style="left:171px;top:60.03px;font-size:12px;line-height:12px;color:#f0f0f0;font-weight:400">No</span><span style="left:19px;top:79.03px;font-size:12px;line-height:12px;color:#e8e8e8">RightToLeftLayout</span><span style="left:171px;top:79.03px;font-size:12px;line-height:12px;color:#f0f0f0;font-weight:400">False</span><span style="left:19px;top:98.03px;font-size:12px;line-height:12px;color:#e8e8e8">Text</span><span style="left:171px;top:98.03px;font-size:12px;line-height:12px;color:#f0f0f0;font-weight:700">Form1</span><span style="left:19px;top:117.03px;font-size:12px;line-height:12px;color:#e8e8e8">UseWaitCursor</span><span style="left:171px;top:117.03px;font-size:12px;line-height:12px;color:#f0f0f0;font-weight:400">False</span></div>
<div style="left:1182px;top:531px;width:20px;height:16px;background:#000;"></div>
<svg style="left:1016px;top:515px;" width="10" height="10" viewBox="0 0 10 10"><rect x="0.5" y="0.5" width="9" height="9" fill="none" stroke="#e8e8e8"/><path d="M2 5 H8 M5 2 V8" stroke="#e8e8e8" stroke-width="1.2"/></svg>
<div style="left:1341px;top:511px;width:18px;height:125px;background:#2b2b2b;"></div>
<svg style="left:1345px;top:515px;" width="10" height="6" viewBox="0 0 10 6"><path d="M0 6 L5 0.5 L10 6 Z" fill="#999"/></svg>
<div style="left:1345px;top:538px;width:9px;height:17px;background:#555;"></div>
<svg style="left:1345px;top:624px;" width="10" height="6" viewBox="0 0 10 6"><path d="M0 0 L5 5.5 L10 0 Z" fill="#999"/></svg>
<div style="left:1013px;top:636px;width:346px;height:62px;background:#1f1f1f;"></div>
<div style="left:1013px;top:635px;width:346px;height:1px;background:#2e2e2e;"></div>
<span style="left:1019px;top:644.03px;font-size:12px;line-height:12px;color:#f0f0f0;font-weight:700;">Text</span>
<span style="left:1019px;top:662.03px;font-size:12px;line-height:12px;color:#e8e8e8;font-weight:400;">Texto asociado al control.</span>
<svg style="left:957px;top:516px;" width="8" height="4" viewBox="0 0 8 4"><path d="M0 0 H8 L4 4 Z" fill="#e0e0e0"/></svg>
<svg style="left:973px;top:513px;" width="9" height="12" viewBox="0 0 9 12"><path d="M2.5 0.5 H6.5 V6.5 M2.5 0.5 V6.5 M0.5 6.5 H8.5 M4.5 7 V11.5" fill="none" stroke="#e8e8e8" stroke-width="1"/><rect x="5.5" y="0" width="1.6" height="7" fill="#e8e8e8"/></svg>
<svg style="left:989px;top:514px;" width="10" height="8" viewBox="0 0 10 8"><path d="M0.5 0.5 L9.5 7.5 M9.5 0.5 L0.5 7.5" stroke="#e8e8e8" stroke-width="1.2"/></svg>
<svg style="left:1311px;top:80px;" width="8" height="4" viewBox="0 0 8 4"><path d="M0 0 H8 L4 4 Z" fill="#e0e0e0"/></svg>
<svg style="left:1327px;top:77px;" width="9" height="12" viewBox="0 0 9 12"><path d="M2.5 0.5 H6.5 V6.5 M2.5 0.5 V6.5 M0.5 6.5 H8.5 M4.5 7 V11.5" fill="none" stroke="#e8e8e8" stroke-width="1"/><rect x="5.5" y="0" width="1.6" height="7" fill="#e8e8e8"/></svg>
<svg style="left:1343px;top:78px;" width="10" height="8" viewBox="0 0 10 8"><path d="M0.5 0.5 L9.5 7.5 M9.5 0.5 L0.5 7.5" stroke="#e8e8e8" stroke-width="1.2"/></svg>
<svg style="left:1311px;top:445px;" width="8" height="4" viewBox="0 0 8 4"><path d="M0 0 H8 L4 4 Z" fill="#e0e0e0"/></svg>
<svg style="left:1327px;top:442px;" width="9" height="12" viewBox="0 0 9 12"><path d="M2.5 0.5 H6.5 V6.5 M2.5 0.5 V6.5 M0.5 6.5 H8.5 M4.5 7 V11.5" fill="none" stroke="#e8e8e8" stroke-width="1"/><rect x="5.5" y="0" width="1.6" height="7" fill="#e8e8e8"/></svg>
<svg style="left:1343px;top:443px;" width="10" height="8" viewBox="0 0 10 8"><path d="M0.5 0.5 L9.5 7.5 M9.5 0.5 L0.5 7.5" stroke="#e8e8e8" stroke-width="1.2"/></svg>
<div style="left:0px;top:705px;width:1366px;height:23px;background:#414141;"></div>
<svg style="left:4px;top:709px;" width="17" height="16" viewBox="0 0 17 16"><path d="M0.7 0.7 H15.3 V12.3 H10 L8 14.7 L6 12.3 H0.7 Z" fill="none" stroke="#e8e8e8" stroke-width="1.2"/></svg>
<span style="left:28px;top:711.03px;font-size:12px;line-height:12px;color:#f0f0f0;font-weight:400;">Listo</span>
<svg style="left:559px;top:708px;" width="17" height="17" viewBox="0 0 17 17"><path d="M0 4.5 H9 M5.5 0.5 V9" stroke="#e8e8e8" stroke-width="1"/><rect x="5.5" y="4.5" width="10" height="10.5" fill="none" stroke="#d8d8d8" stroke-dasharray="1 1"/></svg>
<span style="left:579px;top:711.03px;font-size:12px;line-height:12px;color:#f0f0f0;font-weight:400;letter-spacing:-0.5px">15 , 15</span>
<svg style="left:719px;top:708px;" width="17" height="17" viewBox="0 0 17 17"><path d="M9 2.5 H15 M12.5 0.5 L15 2.5 L12.5 4.5 M3.5 9 V15 M1.5 12.5 L3.5 15 L5.5 12.5" fill="none" stroke="#4aa0f0" stroke-width="1"/><path d="M0 16.5 H7 M7.5 0 V5" stroke="#e0e0e0"/><rect x="7.5" y="5.5" width="8" height="10" fill="none" stroke="#d8d8d8" stroke-dasharray="1 1"/></svg>
<span style="left:739px;top:711.03px;font-size:12px;line-height:12px;color:#f0f0f0;font-weight:400;letter-spacing:-0.5px">816 x 489</span>
<svg style="left:911px;top:709px;" width="14" height="14" viewBox="0 0 14 14"><path d="M7 1 V14 M1.5 6.5 L7 1 L12.5 6.5" fill="none" stroke="#e0e0e0" stroke-width="1.2"/></svg>
<span style="left:933px;top:711.03px;font-size:12px;line-height:12px;color:#f0f0f0;font-weight:400;">Agregar al control de código fuente</span>
<svg style="left:1127px;top:713px;" width="8" height="5" viewBox="0 0 8 5"><path d="M0 5 L4 0 L8 5 Z" fill="#e0e0e0"/></svg>
<svg style="left:1158px;top:710px;" width="14" height="13" viewBox="0 0 14 13"><path d="M0.5 0.5 H13.5 V3.5 H0.5 Z M1.5 3.5 V12.5 H12.5 V3.5 M5.5 3.5 V8.5 H8.5 V3.5" fill="none" stroke="#e0e0e0"/></svg>
<span style="left:1179px;top:711.03px;font-size:12px;line-height:12px;color:#f0f0f0;font-weight:400;">Seleccionar repositorio</span>
<svg style="left:1306px;top:713px;" width="8" height="5" viewBox="0 0 8 5"><path d="M0 5 L4 0 L8 5 Z" fill="#e0e0e0"/></svg>
<svg style="left:1333px;top:708px;" width="22" height="19" viewBox="0 0 22 19"><path d="M2 12.5 C3.5 11 3.5 9 3.5 6.5 C3.5 3 5.5 1 8 1 C10.5 1 12.5 3 12.5 6.5 C12.5 9 12.5 11 14 12.5 Z M6 14 C6.5 15.5 9.5 15.5 10 14" fill="none" stroke="#e0e0e0" stroke-width="1.1"/><circle cx="15" cy="12" r="6" fill="#ee5a78"/><text x="15" y="15.5" text-anchor="middle" font-family="Liberation Sans" font-size="9" font-weight="700" fill="#fff">1</text></svg>
<div style="left:0px;top:728px;width:1366px;height:40px;background:linear-gradient(90deg,#2f3437 0px,#2c3034 200px,#25282d 392px,#2b2828 450px,#2d2828 560px,#283035 630px,#30322e 700px,#36352c 820px,#302e28 980px,#24222c 1040px,#1d1c2a 1100px,#1b1b28 1366px);"></div>
<svg style="left:15px;top:740px;" width="18" height="17" viewBox="0 0 18 17"><path d="M0 2.3 L7.3 1.3 V7.8 H0 Z M8.3 1.1 L17.5 0 V7.8 H8.3 Z M0 8.8 H7.3 V15.4 L0 14.5 Z M8.3 8.8 H17.5 V16.5 L8.3 15.5 Z" fill="#fff"/></svg>
<div style="left:48px;top:728px;width:344px;height:39px;background:#f2f2f2;border-top:1px solid #c8c8c8;box-sizing:border-box"></div>
<svg style="left:60px;top:741px;" width="17" height="17" viewBox="0 0 17 17"><circle cx="10.5" cy="6.5" r="5.5" fill="none" stroke="#222" stroke-width="1.4"/><path d="M6.5 10.5 L0.8 16.2" stroke="#222" stroke-width="1.6"/></svg>
<span style="left:88px;top:740.54px;font-size:15px;line-height:15px;color:#333;font-weight:;letter-spacing:-0.3px">Escribe aquí para buscar</span>
<svg style="left:310px;top:728px;" width="82" height="40" viewBox="0 0 82 40"><defs><linearGradient id="mk" x1="0" y1="0" x2="0.3" y2="1"><stop offset="0" stop-color="#6cc425"/><stop offset="1" stop-color="#0e8a4e"/></linearGradient></defs><circle cx="6.5" cy="5.6" r="1.9" fill="#2ecc40"/><circle cx="15.9" cy="7.2" r="1.9" fill="#e8b830"/><circle cx="31.7" cy="2.8" r="1.9" fill="#b44be0"/><circle cx="39.8" cy="8.4" r="1.9" fill="#e8b830"/><circle cx="49.2" cy="5.6" r="1.9" fill="#2ecc40"/><circle cx="73.1" cy="5.3" r="1.9" fill="#b44be0"/><circle cx="71.9" cy="9.6" r="1.9" fill="#e8b830"/><circle cx="78.4" cy="18.7" r="1.9" fill="#b44be0"/><circle cx="68.1" cy="24.3" r="1.9" fill="#e8b830"/><circle cx="74.4" cy="24.3" r="1.9" fill="#2ecc40"/><circle cx="69.1" cy="29.6" r="1.9" fill="#2ecc40"/><circle cx="65" cy="32" r="1.9" fill="#2ecc40"/><circle cx="75.6" cy="33.6" r="1.9" fill="#b44be0"/><circle cx="54.8" cy="33.6" r="1.9" fill="#e8b830"/><circle cx="50.4" cy="33.3" r="1.9" fill="#b44be0"/><circle cx="6.2" cy="21.5" r="1.9" fill="#b44be0"/><circle cx="7.8" cy="29.2" r="1.9" fill="#2ecc40"/><circle cx="8.1" cy="33.9" r="1.9" fill="#e8b830"/><circle cx="22.4" cy="32" r="1.9" fill="#b44be0"/><circle cx="17.1" cy="36.1" r="1.9" fill="#2ecc40"/><path d="M20 9.3 C26 7.5 33 9 37 13.7 L30 19 C26 16 22 13 20 9.3 Z" fill="#a020d0"/><path d="M8.1 16.8 C11 13 15 11 19 11.2 C24 11.5 28 13 31.1 15.6 L22 21.5 C17 20 12 18.5 8.1 16.8 Z" fill="#f5c518"/><path d="M8.7 25.5 C12 22 17 20 21.8 19.9 L20 25.5 Z" fill="#b030e0"/><path d="M21.2 22.4 C26 18 32 15 37.3 14.3 C41 13.5 44 13 47.3 11.8 C54 8.5 60 6.5 66.9 6.2 C68.5 9 68.2 12 67.8 15.6 C67.5 19 67 22 66 24.9 C64.5 27 62 28.5 59.1 28.9 C56 29 53 28 49.8 27.4 C47 27.5 45 29 43.6 31.1 C41 34 38 36.4 34.8 36.4 C31 36.4 28 35 26.1 32.4 C24 29 22.5 25.5 21.2 22.4 Z" fill="url(#mk)"/><path d="M29.5 25 C32 22.5 36 21 40 21.2 C42.5 21.5 44 22.5 44.5 23.2 C42 26 38.5 28.3 35 28.3 C32.5 28.3 30.5 26.5 29.5 25 Z" fill="#f2f2f2"/><path d="M49.5 22 C50.5 18 53 15 57 13.5 C59 13 61 12.8 62 12.8 C61.5 16 60 19 57.5 21 C55 22 52 22.2 49.5 22 Z" fill="#f2f2f2"/></svg>
<svg style="left:408px;top:740px;" width="17" height="16" viewBox="0 0 17 16"><path d="M0.8 0 V2.8 H12.2 V0 M0.8 15.3 V12.5 H12.2 V15.3" fill="none" stroke="#fff" stroke-width="1.3"/><rect x="0.8" y="4.8" width="11.4" height="5.6" fill="none" stroke="#fff" stroke-width="1.3"/><path d="M15.5 0 V3 M15.5 8 V15.5" stroke="#fff" stroke-width="1.2"/><rect x="14" y="4" width="3" height="3" fill="#fff"/></svg>
<svg style="left:455px;top:736px;" width="25" height="25" viewBox="0 0 25 25"><path d="M0 9 L12.5 0.5 L25 9 V24 H0 Z" fill="#0a64c0"/><path d="M0 9 L12.5 18 L25 9 V24 H0 Z" fill="#2a9af0"/><path d="M3 9 H22 L12.5 16 Z" fill="#fff"/></svg>
<svg style="left:503px;top:736px;" width="25" height="25" viewBox="0 0 25 25"><defs><linearGradient id="eg" x1="0" y1="1" x2="1" y2="0"><stop offset="0" stop-color="#0c5fb4"/><stop offset="0.55" stop-color="#1e9de0"/><stop offset="1" stop-color="#5ee07a"/></linearGradient></defs><circle cx="12.5" cy="12.5" r="12" fill="url(#eg)"/><path d="M4 17 C3 10 8 7 12.5 7.5 C8 9 7 14 9 18 C10.5 21 14 23.5 19 22.5 C15 25.5 6 24 4 17 Z" fill="#1452a8"/><ellipse cx="15.5" cy="14.5" rx="5" ry="4" fill="#1b2f4f"/><path d="M12 20 C16 22 21 20 24.5 15 L25 25 H12 Z" fill="#2c2828"/></svg>
<svg style="left:552px;top:737px;" width="25" height="22" viewBox="0 0 25 22"><path d="M0 2 H9 L11 4 H25 V20 H0 Z" fill="#e8b84a"/><rect x="0" y="6" width="25" height="14" fill="#ffd766"/><rect x="8" y="12" width="9" height="10" fill="#2a7ad0"/><rect x="10" y="16" width="5" height="6" fill="#ffd766"/></svg>
<div style="left:496px;top:766px;width:40px;height:2px;background:#76b9ed;"></div>
<svg style="left:600px;top:736px;" width="26" height="26" viewBox="0 0 26 26"><circle cx="13" cy="13" r="12.5" fill="#db4437"/><path d="M13 13 L2.2 6.7 A12.5 12.5 0 0 0 13 25.5 Z" fill="#0f9d58"/><path d="M13 13 L13 25.5 A12.5 12.5 0 0 0 23.8 6.7 Z" fill="#f4b400"/><path d="M13 13 L23.8 6.7 A12.5 12.5 0 0 0 2.2 6.7 Z" fill="#db4437"/><circle cx="13" cy="13" r="5.8" fill="#fff"/><circle cx="13" cy="13" r="4.5" fill="#4285f4"/></svg>
<div style="left:594px;top:766px;width:40px;height:2px;background:#76b9ed;"></div>
<svg style="left:649px;top:736px;" width="26" height="26" viewBox="0 0 26 26"><circle cx="13" cy="13" r="12.5" fill="#000"/><path d="M13.5 6 V16 C13.5 18 12 19 10.5 19 C9 19 8 18 8 16.5 C8 15 9.2 14 10.5 14 M13.5 6 C14 8 15.5 9.5 17.5 9.5" fill="none" stroke="#fff" stroke-width="2"/><path d="M12.5 6 V15" stroke="#25f4ee" stroke-width="0.8"/><path d="M14.5 7 V16.5" stroke="#fe2c55" stroke-width="0.8"/></svg>
<svg style="left:698px;top:737px;" width="26" height="24" viewBox="0 0 26 24"><rect x="0" y="0" width="26" height="24" rx="7" fill="#3d8cf5"/><rect x="5" y="8" width="11" height="8" rx="2" fill="#fff"/><path d="M16.5 11 L21 8 V16 L16.5 13 Z" fill="#fff"/></svg>
<svg style="left:747px;top:736px;" width="24" height="25" viewBox="0 0 24 25"><rect x="7" y="1" width="17" height="23" fill="#fff" stroke="#2b579a" stroke-width="1"/><path d="M13 5 H22 M13 9 H22 M13 13 H22 M13 17 H22 M13 21 H22" stroke="#2b579a" stroke-width="1.5"/><path d="M0 3 L14 1 V24 L0 22 Z" fill="#2b579a"/><text x="1.5" y="16" font-family="Liberation Sans" font-size="9" font-weight="700" fill="#fff">W</text></svg>
<svg style="left:797px;top:736px;" width="24" height="25" viewBox="0 0 24 25"><rect x="8" y="2" width="16" height="21" fill="#fff" stroke="#d24726"/><path d="M14 7 H22 M14 11 H22 M14 15 H22" stroke="#d24726" stroke-width="1.5"/><path d="M0 3 L15 1 V24 L0 22 Z" fill="#d24726"/><text x="3" y="17" font-family="Liberation Sans" font-size="11" font-weight="700" fill="#fff">P</text></svg>
<svg style="left:849px;top:738px;" width="20" height="20" viewBox="0 0 20 20"><g transform="translate(10 10)"><circle r="6.8" fill="#fff"/><rect x="-1.9" y="-9.3" width="3.8" height="4" fill="#fff" transform="rotate(0)"/><rect x="-1.9" y="-9.3" width="3.8" height="4" fill="#fff" transform="rotate(45)"/><rect x="-1.9" y="-9.3" width="3.8" height="4" fill="#fff" transform="rotate(90)"/><rect x="-1.9" y="-9.3" width="3.8" height="4" fill="#fff" transform="rotate(135)"/><rect x="-1.9" y="-9.3" width="3.8" height="4" fill="#fff" transform="rotate(180)"/><rect x="-1.9" y="-9.3" width="3.8" height="4" fill="#fff" transform="rotate(225)"/><rect x="-1.9" y="-9.3" width="3.8" height="4" fill="#fff" transform="rotate(270)"/><rect x="-1.9" y="-9.3" width="3.8" height="4" fill="#fff" transform="rotate(315)"/><circle r="3.6" fill="#36352c"/></g></svg>
<svg style="left:897px;top:737px;" width="21" height="20" viewBox="0 0 21 20"><rect x="0" y="0" width="21" height="20" fill="#cfa3ff"/><rect x="1.2" y="1.2" width="18.6" height="17.6" fill="#1f0740"/><text x="10.5" y="14.5" text-anchor="middle" font-family="Liberation Sans" font-size="11.5" font-weight="700" fill="#d6b0ff">Ae</text></svg>
<svg style="left:946px;top:737px;" width="22" height="22" viewBox="0 0 22 22"><rect x="0" y="0" width="22" height="22" rx="4" fill="#163a52"/><path d="M0 15 H22 V18 C22 20 20 22 18 22 H4 C2 22 0 20 0 18 Z" fill="#f2f2f2"/><path d="M3 15 C8 17 14 17 19 15 Z" fill="#163a52"/><rect x="9" y="17.8" width="4" height="1.6" fill="#333"/><path d="M6 12 L11 6 L14 8 L9 14 Z" fill="#4fe3c1"/><path d="M10 2.5 L12.5 5 L10 7.5 L7.5 5 Z" fill="#fff"/></svg>
<div style="left:982px;top:728px;width:48px;height:40px;background:#57564f;"></div>
<svg style="left:980px;top:728px;" width="48" height="40" viewBox="0 0 48 40"><path d="M14.2 24.6 L31.5 8.3 V16.3 L18.7 28.4 Z" fill="#7449bd"/><path d="M14.2 14.8 L18.2 17.8 V21.8 L14.2 24.8 Z" fill="#6a43b0"/><path d="M14.4 14.4 L18.7 11.2 L31.5 22.9 V31.8 Z" fill="#a877e0"/><path d="M31.5 8.3 L38 12 V27.6 L31.3 31.8 Z" fill="#cb93f8"/></svg>
<div style="left:982px;top:766px;width:48px;height:2px;background:#76b9ed;"></div>
<svg style="left:1066px;top:735px;" width="24" height="26" viewBox="0 0 24 26"><defs><linearGradient id="mg" x1="0" y1="0" x2="0" y2="1"><stop offset="0" stop-color="#f5c030"/><stop offset="1" stop-color="#f08a1c"/></linearGradient></defs><circle cx="13" cy="14.5" r="10.5" fill="url(#mg)"/><circle cx="7.5" cy="9.5" r="9" fill="#1e1d2a"/><path d="M1 12 C0 9 2 7.5 4 8 C4.5 5 8 4 10 6.5 C12.5 6 14 8 13 10.5 C13 12 12 12.5 11 12.5 H2.5 C1.5 12.5 1 12.2 1 12 Z" fill="#b5d3ee"/><path d="M1.5 11.5 H12.5" stroke="#7aa6d0" stroke-width="1"/></svg>
<span style="left:1098px;top:742.20px;font-size:13px;line-height:13px;color:#ffffff;font-weight:400;">16°C</span>
<svg style="left:1152px;top:743px;" width="14" height="9" viewBox="0 0 14 9"><path d="M1 7.8 L7 1.5 L13 7.8" fill="none" stroke="#fff" stroke-width="1.3"/></svg>
<svg style="left:1174px;top:740px;" width="20" height="16" viewBox="0 0 20 16"><path d="M1.5 6 H4 L7 2.3 V13.7 L4 10 H1.5 Z" fill="none" stroke="#fff" stroke-width="1.2"/><path d="M9 5.8 C10 7 10 9 9 10.2" fill="none" stroke="#fff" stroke-width="1.1"/><path d="M11.6 3.8 C13.2 6 13.2 10 11.6 12.2" fill="none" stroke="#999" stroke-width="1"/><path d="M13.8 1.5 C16.3 5 16.3 11 13.8 14.5" fill="none" stroke="#888" stroke-width="1"/></svg>
<svg style="left:1198px;top:741px;" width="19" height="14" viewBox="0 0 19 14"><path d="M2.2 0 V2.5 M4.6 0 V2.5" stroke="#fff" stroke-width="1"/><path d="M1 2.5 H6 V4.5 C6 6 4.8 7 3.5 7 C2.2 7 1 6 1 4.5 Z" fill="none" stroke="#fff" stroke-width="1.1"/><path d="M3.5 7 V11.5 H5.5" fill="none" stroke="#fff" stroke-width="1.1"/><rect x="5.6" y="3.6" width="10.4" height="7.8" fill="none" stroke="#fff" stroke-width="1.2"/><rect x="7" y="5" width="7.6" height="5" fill="#fff"/><path d="M7 5 H10 L7 7 Z" fill="#1d1c2a"/><rect x="16.2" y="5.5" width="1.4" height="4" fill="#fff"/></svg>
<svg style="left:1224px;top:739px;" width="16" height="17" viewBox="0 0 16 17"><path d="M1.3 15.5 A12.2 12.2 0 0 1 13.5 3.3" fill="none" stroke="#fff" stroke-width="1.1"/><path d="M5.1 15.5 A8.4 8.4 0 0 1 13.5 7.1" fill="none" stroke="#fff" stroke-width="1.1"/><path d="M8.9 15.5 A4.6 4.6 0 0 1 13.5 10.9" fill="none" stroke="#fff" stroke-width="1.1"/><circle cx="13.5" cy="15" r="1.5" fill="#fff"/></svg>
<span style="left:1249px;top:733.03px;font-size:12px;line-height:12px;color:#ffffff;font-weight:400;letter-spacing:-0.3px">06:50 p. m.</span>
<span style="left:1249px;top:751.03px;font-size:12px;line-height:12px;color:#ffffff;font-weight:400;letter-spacing:-0.2px">13/02/2024</span>
<svg style="left:1324px;top:739px;" width="26" height="26" viewBox="0 0 26 26"><path d="M1 1 H17 V13.5 H9 L6.5 16 V13.5 H1 Z" fill="#fff"/><path d="M3.5 4.5 H14.5 M3.5 7.5 H14.5 M3.5 10.5 H11" stroke="#222" stroke-width="1"/><circle cx="16.5" cy="16.5" r="7.6" fill="#2e2e2e" stroke="#777" stroke-width="1"/><text x="16.5" y="20.8" text-anchor="middle" font-family="Liberation Sans" font-size="11.5" fill="#fff">1</text></svg>
<div style="left:1362px;top:728px;width:1px;height:40px;background:#555;"></div>
</body></html>
